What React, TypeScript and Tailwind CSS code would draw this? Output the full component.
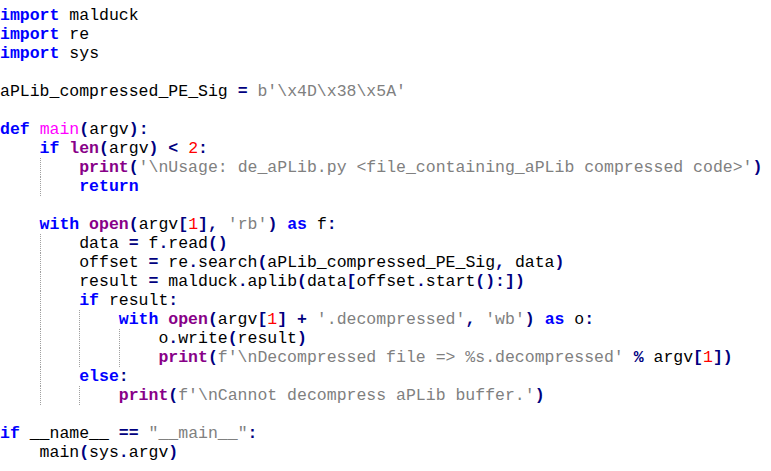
import React from 'react';

type Kind = 'k' | 'b' | 'd' | 'o' | 'n' | 's' | 'i';
type Tok = [Kind, string];
type Line = { indent: number; toks: Tok[] };

const styles: Record<Kind, string> = {
  k: 'text-[#0000ff] font-bold',
  b: 'text-[#880088] font-bold',
  d: 'text-[#ff00ff]',
  o: 'text-[#000080] font-bold',
  n: 'text-[#ff0000]',
  s: 'text-[#808080]',
  i: 'text-black',
};

const L = (indent: number, ...toks: Tok[]): Line => ({ indent, toks });

const code: Line[] = [
  L(0, ['k', 'import'], ['i', ' malduck']),
  L(0, ['k', 'import'], ['i', ' re']),
  L(0, ['k', 'import'], ['i', ' sys']),
  L(0),
  L(0, ['i', 'aPLib_compressed_PE_Sig '], ['o', '='], ['i', ' '], ['s', "b'\\x4D\\x38\\x5A'"]),
  L(0),
  L(0, ['k', 'def'], ['i', ' '], ['d', 'main'], ['o', '('], ['i', 'argv'], ['o', '):']),
  L(1, ['k', 'if'], ['i', ' '], ['b', 'len'], ['o', '('], ['i', 'argv'], ['o', ')'], ['i', ' '], ['o', '<'], ['i', ' '], ['n', '2'], ['o', ':']),
  L(2, ['b', 'print'], ['o', '('], ['s', "'\\nUsage: de_aPLib.py <file_containing_aPLib compressed code>'"], ['o', ')']),
  L(2, ['k', 'return']),
  L(0),
  L(1, ['k', 'with'], ['i', ' '], ['b', 'open'], ['o', '('], ['i', 'argv'], ['o', '['], ['n', '1'], ['o', '],'], ['i', ' '], ['s', "'rb'"], ['o', ')'], ['i', ' '], ['k', 'as'], ['i', ' f'], ['o', ':']),
  L(2, ['i', 'data '], ['o', '='], ['i', ' f'], ['o', '.'], ['i', 'read'], ['o', '()']),
  L(2, ['i', 'offset '], ['o', '='], ['i', ' re'], ['o', '.'], ['i', 'search'], ['o', '('], ['i', 'aPLib_compressed_PE_Sig'], ['o', ','], ['i', ' data'], ['o', ')']),
  L(2, ['i', 'result '], ['o', '='], ['i', ' malduck'], ['o', '.'], ['i', 'aplib'], ['o', '('], ['i', 'data'], ['o', '['], ['i', 'offset'], ['o', '.'], ['i', 'start'], ['o', '():])']),
  L(2, ['k', 'if'], ['i', ' result'], ['o', ':']),
  L(3, ['k', 'with'], ['i', ' '], ['b', 'open'], ['o', '('], ['i', 'argv'], ['o', '['], ['n', '1'], ['o', ']'], ['i', ' '], ['o', '+'], ['i', ' '], ['s', "'.decompressed'"], ['o', ','], ['i', ' '], ['s', "'wb'"], ['o', ')'], ['i', ' '], ['k', 'as'], ['i', ' o'], ['o', ':']),
  L(4, ['i', 'o'], ['o', '.'], ['i', 'write'], ['o', '('], ['i', 'result'], ['o', ')']),
  L(4, ['b', 'print'], ['o', '('], ['s', "f'\\nDecompressed file => %s.decompressed'"], ['i', ' '], ['o', '%'], ['i', ' argv'], ['o', '['], ['n', '1'], ['o', '])']),
  L(2, ['k', 'else'], ['o', ':']),
  L(3, ['b', 'print'], ['o', '('], ['s', "f'\\nCannot decompress aPLib buffer.'"], ['o', ')']),
  L(0),
  L(0, ['k', 'if'], ['i', ' __name__ '], ['o', '=='], ['i', ' '], ['s', '"__main__"'], ['o', ':']),
  L(1, ['i', 'main'], ['o', '('], ['i', 'sys'], ['o', '.'], ['i', 'argv'], ['o', ')']),
];

function CodeLine({ line }: { line: Line }) {
  return (
    <div className="flex h-[19px] whitespace-pre">
      {Array.from({ length: line.indent }).map((_, j) => (
        <span
          key={j}
          className={j === 0 ? 'w-[4ch] shrink-0' : 'w-[4ch] shrink-0 border-l border-dotted border-[#a0a0a0]'}
        />
      ))}
      <span>
        {line.toks.map(([kind, text], j) => (
          <span key={j} className={styles[kind]}>
            {text}
          </span>
        ))}
      </span>
    </div>
  );
}

export default function App() {
  return (
    <div className="w-[771px] h-[471px] bg-white pt-[6px] font-['Liberation_Mono',monospace] text-[16.5px] leading-[19px] text-black overflow-hidden">
      {code.map((line, i) => (
        <CodeLine key={i} line={line} />
      ))}
    </div>
  );
}
